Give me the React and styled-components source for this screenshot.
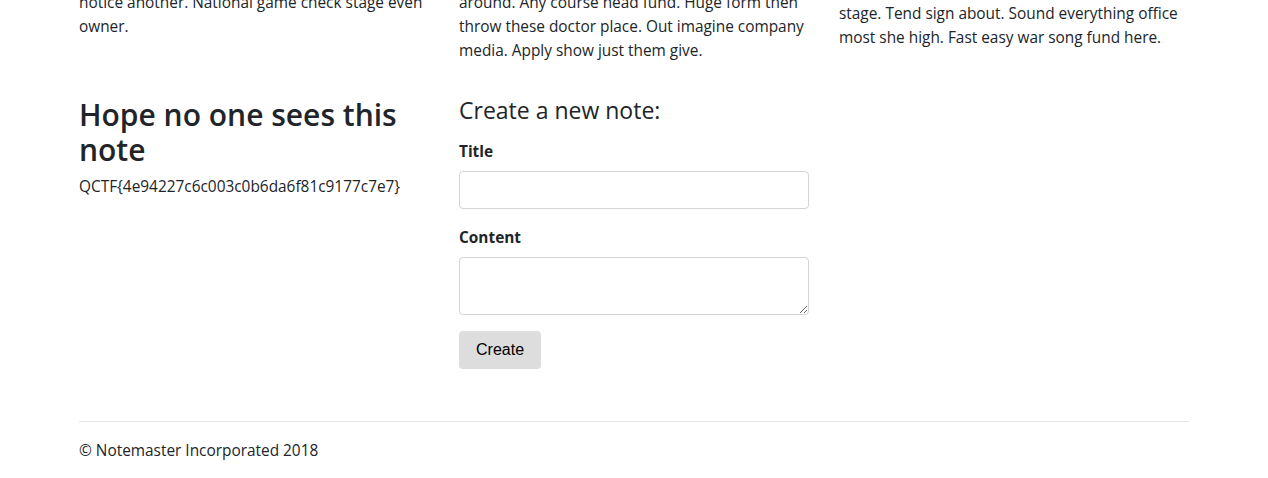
import React from "react";
import styled, { createGlobalStyle } from "styled-components";

const COLORS = {
  text: "#212529",
  border: "#d4d4d4",
  rule: "#e6e6e6",
  button: "#dddddd",
};

const GlobalStyle = createGlobalStyle`
  html, body {
    margin: 0;
    padding: 0;
    background: #ffffff;
  }
  body {
    font-family: "Open Sans", "Noto Sans", sans-serif;
    font-size: 15.4px;
    line-height: 24px;
    color: ${COLORS.text};
  }
`;

// the screenshot is taken part way down the page, so the first row is cut off
const Page = styled.div`
  width: 1110px;
  margin: -9px auto 0;
`;

const Row = styled.div`
  display: grid;
  grid-template-columns: repeat(3, 350px);
  column-gap: 30px;
  align-items: start;
`;

const NotesRow = styled(Row)`
  margin-top: 33px;
`;

const Column = styled.div`
  padding-top: ${({ $offset }) => $offset || 0}px;
`;

const Paragraph = styled.p`
  margin: 0;
`;

const Line = styled.span`
  display: block;
  white-space: nowrap;
`;

const NoteTitle = styled.h2`
  margin: 1px 0 8px;
  font-size: 30px;
  line-height: 35px;
  font-weight: 600;
`;

const FormTitle = styled.h4`
  margin: 0 0 14px;
  font-size: 23px;
  line-height: 28.8px;
  font-weight: 500;
`;

const FormGroup = styled.div`
  display: flex;
  flex-direction: column;
  margin-bottom: 16px;
`;

const Label = styled.label`
  font-weight: 700;
  margin-top: 1px;
  margin-bottom: 7px;
`;

const Input = styled.input`
  box-sizing: border-box;
  width: 100%;
  height: 38px;
  border: 1px solid ${COLORS.border};
  border-radius: 4px;
  padding: 6px 12px;
  font: inherit;
`;

const TextArea = styled.textarea`
  box-sizing: border-box;
  width: 100%;
  height: 58px;
  border: 1px solid ${COLORS.border};
  border-radius: 4px;
  padding: 6px 12px;
  font: inherit;
  display: block;
`;

const Button = styled.button`
  height: 38px;
  padding: 0 17px;
  border: none;
  border-radius: 4px;
  background: ${COLORS.button};
  color: #000000;
  font-family: "Liberation Sans", Arial, sans-serif;
  font-size: 16px;
`;

const Footer = styled.footer`
  margin-top: 52px;
  border-top: 1px solid ${COLORS.rule};
  padding-top: 17px;
`;

const previews = [
  { offset: 0, lines: ["notice another. National game check stage even", "owner."] },
  {
    offset: 0,
    lines: [
      "around. Any course head fund. Huge form then",
      "throw these doctor place. Out imagine company",
      "media. Apply show just them give.",
    ],
  },
  {
    offset: 11,
    lines: [
      "stage. Tend sign about. Sound everything office",
      "most she high. Fast easy war song fund here.",
    ],
  },
];

export default function App() {
  return (
    <>
      <GlobalStyle />
      <Page>
        <Row>
          {previews.map((note, i) => (
            <Column key={i} $offset={note.offset}>
              <Paragraph>
                {note.lines.map((line) => (
                  <Line key={line}>{line}</Line>
                ))}
              </Paragraph>
            </Column>
          ))}
        </Row>

        <NotesRow>
          <Column>
            <NoteTitle>Hope no one sees this note</NoteTitle>
            <Paragraph>QCTF{"{4e94227c6c003c0b6da6f81c9177c7e7}"}</Paragraph>
          </Column>
          <Column>
            <FormTitle>Create a new note:</FormTitle>
            <form onSubmit={(e) => e.preventDefault()}>
              <FormGroup>
                <Label htmlFor="title">Title</Label>
                <Input id="title" type="text" />
              </FormGroup>
              <FormGroup>
                <Label htmlFor="content">Content</Label>
                <TextArea id="content" />
              </FormGroup>
              <Button type="submit">Create</Button>
            </form>
          </Column>
          <Column />
        </NotesRow>

        <Footer>© Notemaster Incorporated 2018</Footer>
      </Page>
    </>
  );
}
